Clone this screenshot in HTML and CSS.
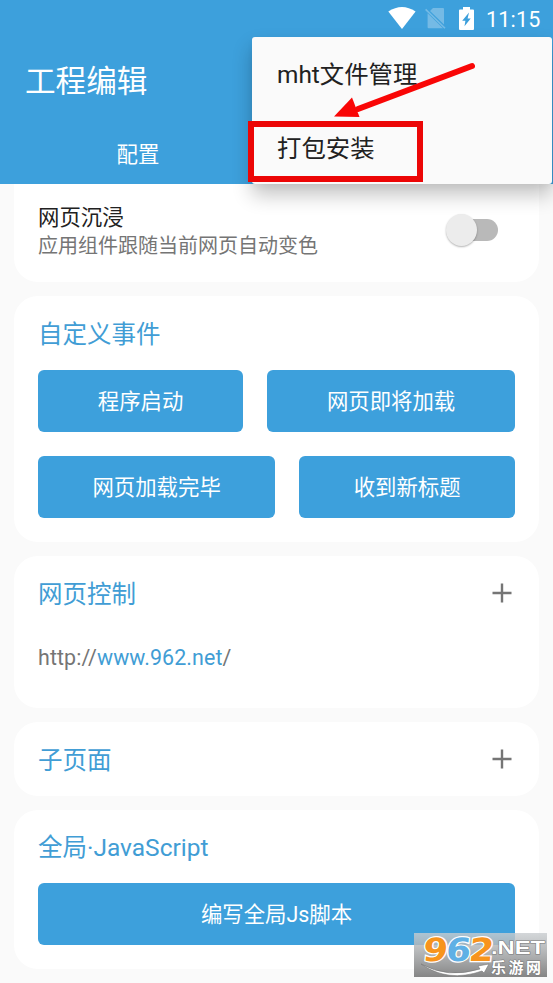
FILE: index.html
```html
<!DOCTYPE html>
<html lang="zh-CN">
<head>
<meta charset="utf-8">
<title>工程编辑</title>
<link rel="stylesheet" href="styles.css">
</head>
<body>
<div class="screen">
  <header class="header">
    <div class="status">
      <svg class="wifi" width="28" height="22" viewBox="0 0 28 22"><path d="M0.3 4.6Q14-4.6 27.6 4.6L14 22Z" fill="#fff"/></svg>
      <svg class="nosim" width="21" height="22" viewBox="0 0 21 22"><path d="M8 1H18a1 1 0 0 1 1 1V17.6L5 3.9ZM2.6 6.2 18 21.2H3.6a1 1 0 0 1-1-1Z" fill="#74bae5"/><path d="M.6 2.4 20 21.3" stroke="#74bae5" stroke-width="1.6"/></svg>
      <svg class="battery" width="15" height="24" viewBox="0 0 15 24"><path d="M4 0h7v2.5h3a1 1 0 0 1 1 1V22a1 1 0 0 1-1 1H1a1 1 0 0 1-1-1V3.500a1 1 0 0 1 1-1h3Z" fill="#fff"/><path d="M10 5.500 3.200 13.700h3.200L5.500 19.300l6.200-7.700H8.600Z" fill="#3c9fdb"/></svg>
      <span class="clock">11:15</span>
    </div>
    <h1 class="title">工程编辑</h1>
    <nav class="tabs"><span class="tab">配置</span></nav>
  </header>

  <main class="content">
    <section class="card card-immersive">
      <div>
        <div class="setting-name">网页沉浸</div>
        <div class="setting-note">应用组件跟随当前网页自动变色</div>
      </div>
      <div class="switch"><span class="thumb"></span></div>
    </section>

    <section class="card card-events">
      <h2 class="heading">自定义事件</h2>
      <div class="row"><button class="btn">程序启动</button><button class="btn">网页即将加载</button></div>
      <div class="row"><button class="btn">网页加载完毕</button><button class="btn">收到新标题</button></div>
    </section>

    <section class="card card-control">
      <div class="head">
        <h2 class="heading">网页控制</h2>
        <svg class="plus" width="20" height="20" viewBox="0 0 20 20"><path d="M10 .5v19M.5 10h19" stroke="#757575" stroke-width="2.400"/></svg>
      </div>
      <p class="url">http://<span class="host">www.962.net</span>/</p>
    </section>

    <section class="card card-sub">
      <div class="head">
        <h2 class="heading">子页面</h2>
        <svg class="plus" width="20" height="20" viewBox="0 0 20 20"><path d="M10 .5v19M.5 10h19" stroke="#757575" stroke-width="2.400"/></svg>
      </div>
    </section>

    <section class="card card-js">
      <h2 class="heading">全局·JavaScript</h2>
      <div class="row"><button class="btn">编写全局Js脚本</button></div>
    </section>
  </main>

  <div class="menu">
    <div class="item">mht文件管理</div>
    <div class="item">打包安装</div>
  </div>
  <div class="marker"></div>
  <svg class="arrow" width="150" height="70" viewBox="0 0 150 70"><path d="M142 11 28 54" stroke="#f90606" stroke-width="6" stroke-linecap="round"/><path d="M4 61.500 22 42.500 29.500 62Z" fill="#f90606"/></svg>

  <svg class="watermark" width="133" height="44" viewBox="0 0 133 44">
    <defs><linearGradient id="shade" x1="0" y1="0" x2="0" y2="1"><stop offset="0" stop-color="#c9cdd0" stop-opacity=".8"/><stop offset="1" stop-color="#7f7f7f" stop-opacity=".95"/></linearGradient></defs>
    <rect width="133" height="44" fill="url(#shade)"/>
    <g class="wm-num" transform="translate(8 27.500) skewX(-6)">
      <text x="0" y="0" textLength="25" lengthAdjust="spacingAndGlyphs" fill="#f7941d">9</text>
      <text x="23" y="0" textLength="25" lengthAdjust="spacingAndGlyphs" fill="#5fb0e5">6</text>
      <text x="46" y="0" textLength="25" lengthAdjust="spacingAndGlyphs" fill="#f7941d">2</text>
    </g>
    <path d="M7 31Q34 46 66 36L64 33 75 31 70 40 68 38Q34 50 7 31Z" fill="#fff" stroke="#777" stroke-width=".6"/>
    <text class="wm-net" x="77" y="21" textLength="54" lengthAdjust="spacingAndGlyphs">.NET</text>
    <text class="wm-cn" x="77" y="40" textLength="50">乐游网</text>
  </svg>
</div>
</body>
</html>
```
FILE: styles.css
```css
* { box-sizing: border-box; }
body { margin: 0; background: #fafafa; font-family: Roboto, "Noto Sans CJK SC", sans-serif; }
.screen { position: relative; width: 553px; height: 983px; overflow: hidden; }
h1, h2, p { margin: 0; font-weight: 400; }

.header { height: 184px; background: #3da0dc; color: #fff; }
.status { height: 37px; padding: 7px 13px 0 0; display: flex; justify-content: flex-end; align-items: flex-start; }
.nosim { margin-left: 9px; }
.battery { margin-left: 13px; }
.clock { margin-left: 12px; width: 54px; font-size: 21.500px; line-height: 25px; letter-spacing: .2px; white-space: nowrap; font-weight: 400; }
.title { padding: 23px 0 0 25px; font-size: 30.600px; line-height: 44px; }
.tabs { width: 276px; padding-top: 35px; text-align: center; font-size: 21.400px; line-height: 32px; }

.content { padding: 0 14px; display: flex; flex-direction: column; gap: 14px; }
.card { background: #fff; border-radius: 24px; padding: 0 24px; }
.card-immersive { height: 98px; border-radius: 0 0 24px 24px; display: flex; justify-content: space-between; padding-top: 19px; }
.setting-name { font-size: 21.400px; line-height: 30px; color: #212121; }
.setting-note { font-size: 20px; line-height: 27px; color: #757575; }
.switch { position: relative; width: 49px; height: 22px; margin: 16px 17px 0 0; border-radius: 11px; background: #b9b9b9; }
.thumb { position: absolute; left: -3px; top: -5px; width: 31px; height: 32px; border-radius: 50%; background: #ececec; box-shadow: 0 1px 2px rgba(0,0,0,.3); }

.heading { font-size: 24.500px; line-height: 36px; color: #419dd5; }
.card-events { height: 246px; padding-top: 21px; }
.row { display: flex; gap: 24px; margin-bottom: 24px; }
.card-events .heading, .card-js .heading { margin-bottom: 17px; }
.btn { flex: 1 1 auto; height: 62px; padding: 2px 0 0; border: 0; border-radius: 6px; background: #3da0dc; color: #fff; font: 21.400px/60px Roboto, "Noto Sans CJK SC", sans-serif; }
.card-control { height: 152px; padding-top: 21px; }
.card-sub { height: 74px; padding-top: 21px; }
.plus { margin-top: -4px; }
.head { display: flex; justify-content: space-between; align-items: center; padding-right: 3px; }
.url { margin-top: 30px; font-size: 21.400px; line-height: 30px; letter-spacing: .1px; color: #757575; }
.host { color: #419dd5; }
.card-js { height: 159px; padding-top: 20px; }

.menu { position: absolute; left: 252px; top: 37px; width: 300px; height: 147px; padding: 1px 0 0 25px; border-radius: 3px; background: #fafafa; color: #212121; font-size: 24.400px; box-shadow: 0 11px 20px rgba(0,0,0,.24), 0 3px 6px rgba(0,0,0,.04); }
.item { height: 74px; line-height: 74px; }
.item:last-child { height: 72px; }
.marker { position: absolute; left: 248px; top: 121px; width: 175px; height: 61px; border: 6px solid #ec0606; }
.arrow { position: absolute; left: 330px; top: 55px; }
.watermark { position: absolute; left: 414px; top: 933px; overflow: visible; }
.wm-num text { font: 700 32px "DejaVu Sans", sans-serif; stroke: #fff; stroke-width: 2.400px; paint-order: stroke; }
.wm-net, .wm-cn { fill: #fff; stroke: #777; stroke-width: 1px; paint-order: stroke; }
.wm-net { font: 700 18px "Liberation Sans", sans-serif; }
.wm-cn { font: 700 15px "Noto Sans CJK SC", sans-serif; }
```
